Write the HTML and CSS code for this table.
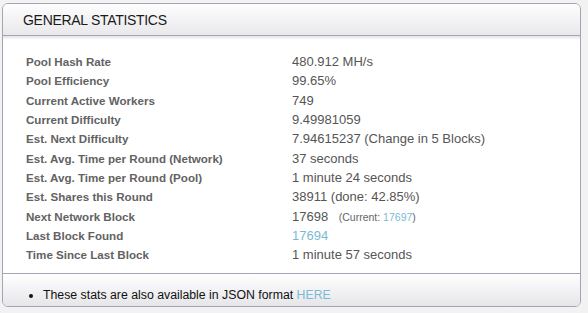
FILE: index.html
```html
<!DOCTYPE html>
<html>
<head>
<meta charset="utf-8">
<link rel="stylesheet" href="styles.css">
</head>
<body>
<div class="box">
  <div class="box-head"><h3>General Statistics</h3></div>
  <div class="box-content">
    <table class="stats">
      <tr><th>Pool Hash Rate</th><td>480.912 MH/s</td></tr>
      <tr><th>Pool Efficiency</th><td>99.65%</td></tr>
      <tr><th>Current Active Workers</th><td>749</td></tr>
      <tr><th>Current Difficulty</th><td>9.49981059</td></tr>
      <tr><th>Est. Next Difficulty</th><td>7.94615237 (Change in 5 Blocks)</td></tr>
      <tr><th>Est. Avg. Time per Round (Network)</th><td>37 seconds</td></tr>
      <tr><th>Est. Avg. Time per Round (Pool)</th><td>1 minute 24 seconds</td></tr>
      <tr><th>Est. Shares this Round</th><td>38911 (done: 42.85%)</td></tr>
      <tr><th>Next Network Block</th><td>17698 <span class="small">(Current: <a href="#">17697</a>)</span></td></tr>
      <tr><th>Last Block Found</th><td><a href="#">17694</a></td></tr>
      <tr><th>Time Since Last Block</th><td>1 minute 57 seconds</td></tr>
    </table>
  </div>
  <div class="box-foot">
    <ul>
      <li>These stats are also available in JSON format <a href="#">HERE</a></li>
    </ul>
  </div>
</div>
</body>
</html>
```
FILE: styles.css
```css
html, body {
  margin: 0;
  padding: 0;
  background: #f2f2f2;
  font-family: "Liberation Sans", Arial, sans-serif;
}
body {
  padding: 3px 7px 5px 2px;
}
.box {
  border: 1px solid #a2a5b3;
  border-radius: 6px;
  background: #fff;
  overflow: hidden;
}
.box-head {
  height: 31px;
  border-bottom: 1px solid #a2a5b3;
  background: linear-gradient(#fdfdfd, #e9e9ec);
  padding-left: 20px;
}
.box-head h3 {
  margin: 0;
  font-size: 14px;
  font-weight: normal;
  line-height: 32px;
  text-transform: uppercase;
  color: #1a1a1a;
  letter-spacing: -0.3px;
}
.box-content {
  padding: 16px 0 9px 23px;
  box-shadow: inset 0 4px 3px -2px #e4e4e8;
}
.stats {
  border-collapse: collapse;
}
.stats th, .stats td {
  padding: 0;
  height: 19.3px;
  color: #555;
  text-align: left;
  vertical-align: middle;
}
.stats th {
  width: 266px;
  font-size: 11.6px;
  font-weight: bold;
  color: #626262;
}
.stats td {
  font-size: 13px;
}
.stats a {
  color: #7bbad3;
  text-decoration: none;
}
.small {
  font-size: 10.5px;
  margin-left: 7px;
  color: #666;
}
.box-foot {
  border-top: 1px solid #a2a5b3;
  background: linear-gradient(#ffffff, #e6e6ea);
  height: 32px;
}
.box-foot ul {
  margin: 0;
  padding: 14px 0 0 40px;
  font-size: 12.3px;
  line-height: 14px;
  color: #111;
}
.box-foot a {
  color: #7bbad3;
  text-decoration: none;
}
```
